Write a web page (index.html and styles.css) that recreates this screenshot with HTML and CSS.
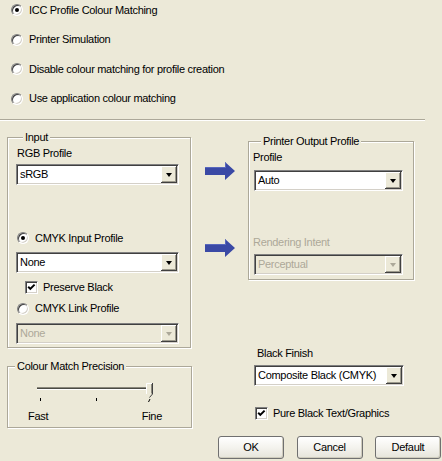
FILE: index.html
```html
<!DOCTYPE html>
<html>
<head>
<meta charset="utf-8">
<link rel="stylesheet" href="styles.css">
</head>
<body>
<div class="modes">
  <div class="opt"><span class="radio on"></span>ICC Profile Colour Matching</div>
  <div class="opt"><span class="radio"></span>Printer Simulation</div>
  <div class="opt"><span class="radio"></span>Disable colour matching for profile creation</div>
  <div class="opt"><span class="radio"></span>Use application colour matching</div>
</div>
<div class="sep"></div>
<div class="main">
  <div class="col-left">
    <div class="group input">
      <div class="gtitle">Input</div>
      <div class="lbl">RGB Profile</div>
      <div class="combo"><span class="val">sRGB</span><span class="btn"></span></div>
      <div class="opt cmyk"><span class="radio on"></span>CMYK Input Profile</div>
      <div class="combo c2"><span class="val">None</span><span class="btn"></span></div>
      <div class="opt chk-row"><span class="check"><svg width="9" height="9" viewBox="0 0 9 9"><polyline points="1.2,3.8 3.3,5.9 7.6,1.6" fill="none" stroke="#000" stroke-width="2"/></svg></span>Preserve Black</div>
      <div class="opt link"><span class="radio"></span>CMYK Link Profile</div>
      <div class="combo disabled c3"><span class="val">None</span><span class="btn"></span></div>
    </div>
    <div class="group precision">
      <div class="gtitle">Colour Match Precision</div>
      <svg class="slider" width="176" height="26" viewBox="0 0 176 26">
        <rect x="29" y="9" width="115" height="1" fill="#8a887c"/>
        <rect x="29" y="10" width="115" height="1" fill="#4a4a44"/>
        <rect x="29" y="11" width="115" height="1" fill="#ffffff"/>
        <rect x="32" y="20" width="1" height="3" fill="#000"/>
        <rect x="88" y="20" width="1" height="3" fill="#000"/>
        <polygon points="138,5 145,5 145,16 141.5,19.5 138,16" fill="#ECE9D8"/>
        <polyline points="138.5,16 138.5,5.5 144,5.5" fill="none" stroke="#fff" stroke-width="1"/>
        <polyline points="144.5,5 144.5,16 141.5,19.5" fill="none" stroke="#404040" stroke-width="1"/>
        <line x1="143.5" y1="6" x2="143.5" y2="15.5" stroke="#8a887c" stroke-width="1"/>
        <line x1="142" y1="21" x2="140.5" y2="24" stroke="#000" stroke-width="1"/>
      </svg>
      <div class="scale"><span>Fast</span><span>Fine</span></div>
    </div>
  </div>
  <div class="col-right">
    <div class="printer-row">
      <div class="arrows">
        <svg width="30" height="18" viewBox="0 0 30 18"><path d="M0 5 H20 V0 L30 9 L20 18 V13 H0 Z" fill="#3a49a5"/><path d="M0 5 H20 V0 L21 1 V6 H0 Z" fill="#5867bd"/></svg>
        <svg width="30" height="18" viewBox="0 0 30 18"><path d="M0 5 H20 V0 L30 9 L20 18 V13 H0 Z" fill="#3a49a5"/><path d="M0 5 H20 V0 L21 1 V6 H0 Z" fill="#5867bd"/></svg>
      </div>
      <div class="group printer">
        <div class="gtitle">Printer Output Profile</div>
        <div class="lbl">Profile</div>
        <div class="combo"><span class="val">Auto</span><span class="btn"></span></div>
        <div class="lbl dis">Rendering Intent</div>
        <div class="combo disabled"><span class="val">Perceptual</span><span class="btn"></span></div>
      </div>
    </div>
    <div class="finish">
      <div class="lbl">Black Finish</div>
      <div class="combo"><span class="val">Composite Black (CMYK)</span><span class="btn"></span></div>
      <div class="opt pure"><span class="check"><svg width="9" height="9" viewBox="0 0 9 9"><polyline points="1.2,3.8 3.3,5.9 7.6,1.6" fill="none" stroke="#000" stroke-width="2"/></svg></span>Pure Black Text/Graphics</div>
    </div>
    <div class="buttons">
      <button class="btn-ok">OK</button>
      <button>Cancel</button>
      <button>Default</button>
    </div>
  </div>
</div>
</body>
</html>
```
FILE: styles.css
```css
* { box-sizing: border-box; }
html, body { margin: 0; padding: 0; }
body {
  width: 442px;
  height: 461px;
  overflow: hidden;
  background: #ECE9D8;
  font-family: "Liberation Sans", Arial, sans-serif;
  font-size: 11px;
  letter-spacing: -0.3px;
  line-height: 13px;
  color: #000;
}

.modes {
  padding: 3.5px 0 0 11px;
  display: flex;
  flex-direction: column;
  gap: 16.5px;
}
.opt {
  display: flex;
  align-items: center;
  height: 13px;
  white-space: nowrap;
}
.radio {
  flex: none;
  width: 12px;
  height: 12px;
  border-radius: 50%;
  background: #fff;
  border: 1px solid;
  border-color: #808080 #fff #fff #808080;
  box-shadow: inset 1px 1px 0 #404040, inset -1px -1px 0 #D4D0C8;
  margin-right: 6px;
  display: flex;
  align-items: center;
  justify-content: center;
}
.radio.on::after {
  content: "";
  width: 4px;
  height: 4px;
  border-radius: 50%;
  background: #000;
}
.check {
  flex: none;
  width: 13px;
  height: 13px;
  background: #fff;
  border: 1px solid;
  border-color: #808080 #fff #fff #808080;
  box-shadow: inset 1px 1px 0 #404040, inset -1px -1px 0 #D4D0C8;
  margin-right: 5px;
  display: flex;
  align-items: center;
  justify-content: center;
}
.check svg { display: block; }

.sep {
  margin-top: 14px;
  width: 425px;
  border-top: 1px solid #ACA899;
  border-bottom: 1px solid #fff;
}

.main {
  display: flex;
  margin-top: 16px;
  padding-left: 7px;
}
.col-left { flex: none; width: 185px; }
.col-right { flex: 1; }

.group {
  border: 1px solid #ACA899;
  box-shadow: inset 1px 1px 0 #fff, 1px 1px 0 #fff;
}
.gtitle {
  width: fit-content;
  height: 13px;
  margin: -7px 0 0 7px;
  padding: 0 2px;
  background: #ECE9D8;
  white-space: nowrap;
}
.lbl {
  height: 13px;
  margin-top: 3px;
  white-space: nowrap;
}

.combo {
  height: 21px;
  background: #fff;
  border: 1px solid;
  border-color: #808080 #fff #fff #808080;
  box-shadow: inset 1px 1px 0 #404040, inset -1px -1px 0 #D4D0C8;
  padding: 1px;
  display: flex;
  align-items: center;
}
.combo .val {
  flex: 1;
  padding-left: 2px;
  white-space: nowrap;
  overflow: hidden;
}
.combo .btn {
  flex: none;
  align-self: stretch;
  width: 16px;
  background: #ECE9D8;
  box-shadow: inset -1px -1px 0 #404040, inset 1px 1px 0 #fff, inset -2px -2px 0 #9d9a8c;
  display: flex;
  align-items: center;
  justify-content: center;
}
.combo .btn::after {
  content: "";
  width: 0;
  height: 0;
  margin: 1px 1px 0 0;
  border-top: 4px solid #000;
  border-left: 3.5px solid transparent;
  border-right: 3.5px solid transparent;
}
.combo.disabled { background: #ECE9D8; color: #ACA899; }
.combo.disabled .btn::after { border-top-color: #ACA899; }

/* Input group */
.input {
  width: 184px;
  padding: 0 0 3px 8px;
}
.input .lbl { padding-left: 1px; }
.input .combo { width: 163px; margin-top: 3.5px; }
.input .cmyk { margin-top: 47px; padding-left: 1px; }
.input .c2 { margin-top: 7.5px; }
.input .chk-row { margin-top: 8px; padding-left: 9px; }
.input .link { margin-top: 8px; padding-left: 1px; }
.input .c3 { margin-top: 8px; }

/* Precision group */
.precision {
  width: 185px;
  margin-top: 18px;
  padding: 0 0 4px 0;
}
.slider { display: block; margin-top: 5px; }
.scale {
  display: flex;
  justify-content: space-between;
  width: 134px;
  margin: 6px 0 0 20px;
}

/* Right column */
.printer-row { display: flex; align-items: flex-start; }
.arrows {
  flex: none;
  width: 30px;
  margin-left: 13px;
  padding-top: 25px;
  display: flex;
  flex-direction: column;
  gap: 59px;
}
.arrows svg { display: block; }
.printer {
  flex: none;
  width: 166px;
  margin: 4px 0 0 13px;
  padding: 0 0 4px 5px;
}
.printer .lbl { margin-left: -1px; }
.printer .combo { width: 149px; margin-top: 6px; }
.printer .lbl.dis { margin-top: 44.5px; color: #ACA899; }
.printer .combo.disabled { margin-top: 5.5px; }

.finish { margin-left: 62px; }
.finish .lbl { margin-top: 67px; padding-left: 3px; }
.finish .combo { width: 150px; margin-top: 5px; }
.finish .pure { margin-top: 20.5px; padding-left: 1px; }

.buttons {
  display: flex;
  gap: 12.5px;
  margin: 16.5px 0 0 26px;
}
.buttons button {
  width: 66px;
  height: 23px;
  padding: 0;
  font: inherit;
  letter-spacing: inherit;
  color: #000;
  background: linear-gradient(#ffffff, #f4f3ee 50%, #e6e4da);
  border: 1px solid #707070;
  border-radius: 3px;
  box-shadow: inset -1px -1px 0 #cfccbd;
}
```
